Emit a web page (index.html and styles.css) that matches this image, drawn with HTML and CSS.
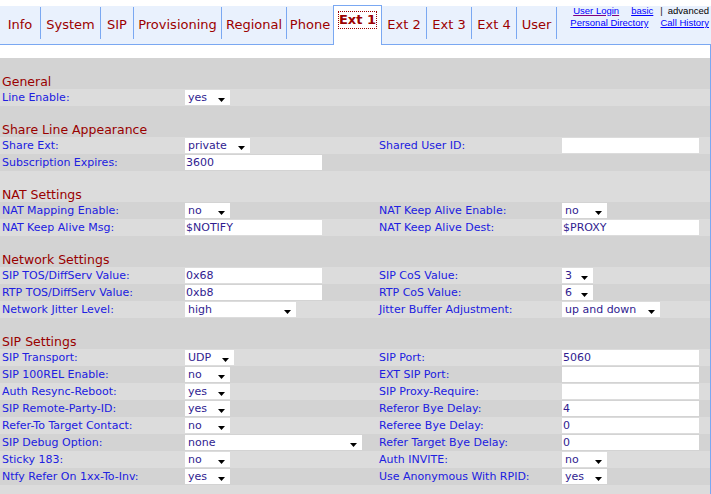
FILE: index.html
```html
<!DOCTYPE html>
<html>
<head>
<meta charset="utf-8">
<title>Ext 1</title>
<link rel="stylesheet" href="styles.css">
</head>
<body>
<div class="tabs">
  <div class="tab first">Info</div>
  <div class="tab">System</div>
  <div class="tab">SIP</div>
  <div class="tab">Provisioning</div>
  <div class="tab">Regional</div>
  <div class="tab">Phone</div>
  <div class="tab active"><span class="focus">Ext 1</span></div>
  <div class="tab noline">Ext 2</div>
  <div class="tab">Ext 3</div>
  <div class="tab">Ext 4</div>
  <div class="tab">User</div>
  <div class="links">
    <div class="line"><a class="visited">User Login</a><a class="gap">basic</a><span class="sep">|</span><span class="cur">advanced</span></div>
    <div class="line"><a>Personal Directory</a><a class="gap">Call History</a></div>
  </div>
</div>
<div class="content">
  <div class="form">
    <div class="r h">General</div>
    <div class="r"><span class="lbl">Line Enable:</span><span class="sel w45">yes</span></div>

    <div class="r h">Share Line Appearance</div>
    <div class="r"><span class="lbl">Share Ext:</span><span class="sel w65">private</span><span class="lbl">Shared User ID:</span><span class="in"></span></div>
    <div class="r"><span class="lbl">Subscription Expires:</span><span class="in">3600</span></div>

    <div class="r h">NAT Settings</div>
    <div class="r"><span class="lbl">NAT Mapping Enable:</span><span class="sel w45">no</span><span class="lbl">NAT Keep Alive Enable:</span><span class="sel w45">no</span></div>
    <div class="r"><span class="lbl">NAT Keep Alive Msg:</span><span class="in">$NOTIFY</span><span class="lbl">NAT Keep Alive Dest:</span><span class="in">$PROXY</span></div>

    <div class="r h">Network Settings</div>
    <div class="r"><span class="lbl">SIP TOS/DiffServ Value:</span><span class="in">0x68</span><span class="lbl">SIP CoS Value:</span><span class="sel w31">3</span></div>
    <div class="r"><span class="lbl">RTP TOS/DiffServ Value:</span><span class="in">0xb8</span><span class="lbl">RTP CoS Value:</span><span class="sel w31">6</span></div>
    <div class="r"><span class="lbl">Network Jitter Level:</span><span class="sel w111">high</span><span class="lbl">Jitter Buffer Adjustment:</span><span class="sel w98">up and down</span></div>

    <div class="r h">SIP Settings</div>
    <div class="r"><span class="lbl">SIP Transport:</span><span class="sel w49">UDP</span><span class="lbl">SIP Port:</span><span class="in">5060</span></div>
    <div class="r"><span class="lbl">SIP 100REL Enable:</span><span class="sel w45">no</span><span class="lbl">EXT SIP Port:</span><span class="in"></span></div>
    <div class="r"><span class="lbl">Auth Resync-Reboot:</span><span class="sel w45">yes</span><span class="lbl">SIP Proxy-Require:</span><span class="in"></span></div>
    <div class="r"><span class="lbl">SIP Remote-Party-ID:</span><span class="sel w45">yes</span><span class="lbl">Referor Bye Delay:</span><span class="in">4</span></div>
    <div class="r"><span class="lbl">Refer-To Target Contact:</span><span class="sel w45">no</span><span class="lbl">Referee Bye Delay:</span><span class="in">0</span></div>
    <div class="r"><span class="lbl">SIP Debug Option:</span><span class="sel w177">none</span><span class="lbl">Refer Target Bye Delay:</span><span class="in">0</span></div>
    <div class="r"><span class="lbl">Sticky 183:</span><span class="sel w45">no</span><span class="lbl">Auth INVITE:</span><span class="sel w45">no</span></div>
    <div class="r"><span class="lbl">Ntfy Refer On 1xx-To-Inv:</span><span class="sel w45">yes</span><span class="lbl">Use Anonymous With RPID:</span><span class="sel w45">yes</span></div>
    <div class="r h"></div>
  </div>
</div>
</body>
</html>
```
FILE: styles.css
```css
html { overflow: hidden; }
body {
  margin: 0;
  width: 711px;
  background: #fff;
  font-family: "DejaVu Sans", Verdana, sans-serif;
}

.tabs {
  display: grid;
  grid-template-columns: 40px 60px 33px 88px 65px 47px 49px 44px 45px 45px 40px 1fr;
  margin-top: 6px;
  height: 38px;
  background: #e9f1fd;
  border-bottom: 1px solid #7aa8f2;
}
.tab {
  margin: 1px 0 5px;
  border-left: 1px solid #7aa8f2;
  padding-top: 3px;
  line-height: 29px;
  font-size: 13px;
  color: #9c0000;
  text-align: center;
  white-space: nowrap;
}
.tab.first, .tab.noline { border-left: none; }
.tab.active {
  margin: -1px 0 -1px;
  border: 1px solid #7aa8f2;
  border-bottom: none;
  background: #fff;
  padding-top: 6px;
  line-height: 16px;
}
.focus {
  display: inline-block;
  font-weight: bold;
  line-height: 16px;
  outline: 1px dotted #990000;
}
.links {
  margin: 1px 0 5px;
  border-left: 1px solid #7aa8f2;
  padding-right: 2px;
  font-family: "Liberation Sans", Arial, sans-serif;
  font-size: 9.5px;
  line-height: 12px;
}
.line {
  display: flex;
  justify-content: flex-end;
  white-space: nowrap;
}
.line:first-child { margin-top: -2px; }
.links a {
  color: #0000ff;
  text-decoration: underline;
}
.links a.visited { text-decoration-color: #800080; }
.links .gap { margin-left: 12px; }
.sep { margin-left: 7px; color: #222; }
.cur { margin-left: 5px; color: #000; }

.content {
  width: 710px;
  border-right: 1px solid #7aa8f2;
  padding-top: 13px;
}
.form { background: #d3d3d3; }
.r {
  display: grid;
  grid-template-columns: 185px 192px 185px 1fr;
  height: 17px;
  font-size: 11px;
  line-height: 17px;
}
.r:nth-child(even) { background: #dcdcdc; }
.r.h {
  display: block;
  height: 31px;
  box-sizing: border-box;
  padding: 16px 0 0 2px;
  font-size: 12.5px;
  line-height: 15px;
  color: #990000;
}
.lbl {
  padding: 1px 0 0 2px;
  line-height: 16px;
  color: #2020e0;
  white-space: nowrap;
}
.in, .sel {
  align-self: start;
  justify-self: start;
  margin-top: 1px;
  height: 15px;
  padding-top: 1px;
  line-height: 14px;
  box-sizing: border-box;
  background: #fff;
  color: #301c90;
  white-space: nowrap;
}
.in {
  width: 137px;
  padding-left: 1px;
}
.sel {
  display: flex;
  align-items: center;
  justify-content: space-between;
  padding-left: 3px;
  padding-right: 5px;
}
.sel::after {
  content: "";
  width: 7px;
  height: 4px;
  margin-top: 4px;
  background: #000;
  clip-path: polygon(0 0, 100% 0, 50% 100%);
}
.w31 { width: 31px; }
.w45 { width: 45px; }
.w49 { width: 49px; }
.w65 { width: 65px; }
.w98 { width: 98px; }
.w111 { width: 111px; }
.w177 { width: 177px; }
```
